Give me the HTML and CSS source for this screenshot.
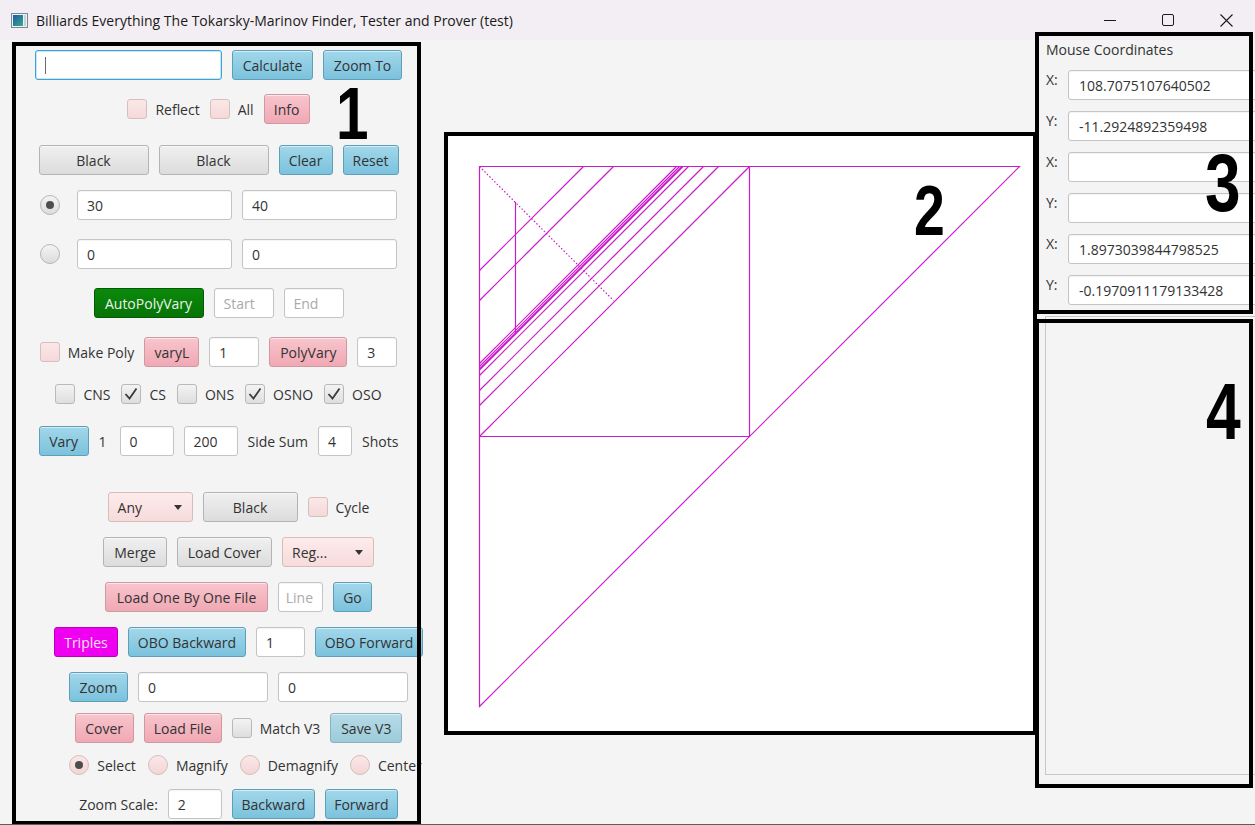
FILE: index.html
```html
<!DOCTYPE html>
<html lang="en">
<head>
<meta charset="utf-8">
<title>Billiards Everything</title>
<link rel="stylesheet" href="styles.css">
</head>
<body>
<div class="window">
  <header class="titlebar">
    <svg class="appicon" width="17" height="15" viewBox="0 0 17 15">
      <defs>
        <linearGradient id="ig" x1="0" y1="0" x2="1" y2="1">
          <stop offset="0" stop-color="#1d5aa6"/>
          <stop offset="1" stop-color="#3aa98a"/>
        </linearGradient>
      </defs>
      <rect x="0.5" y="0.5" width="16" height="14" fill="#eef2f5" stroke="#7b8894"/>
      <rect x="2" y="2" width="10" height="11" fill="url(#ig)"/>
      <rect x="13" y="2" width="2" height="11" fill="#c7d1d8"/>
    </svg>
    <span class="title">Billiards Everything The Tokarsky-Marinov Finder, Tester and Prover (test)</span>
    <div class="winctl">
      <span class="wbtn"><svg width="12" height="12" viewBox="0 0 12 12"><path d="M0 6.5H12" stroke="#1a1a1a" stroke-width="1"/></svg></span>
      <span class="wbtn"><svg width="12" height="12" viewBox="0 0 12 12"><rect x="0.5" y="0.5" width="11" height="11" rx="1.5" fill="none" stroke="#1a1a1a" stroke-width="1"/></svg></span>
      <span class="wbtn"><svg width="13" height="13" viewBox="0 0 13 13"><path d="M0.5 0.5L12.5 12.5M12.5 0.5L0.5 12.5" stroke="#1a1a1a" stroke-width="1.1"/></svg></span>
    </div>
  </header>

  <main class="main">
    <section class="left">
      <div class="group-a">
        <div class="row">
          <div class="field focused w187"><span class="caret"></span></div>
          <button class="btn blue w81">Calculate</button>
          <button class="btn blue w79">Zoom To</button>
        </div>
        <div class="row m14">
          <label class="chk"><span class="cb rose"></span><span>Reflect</span></label>
          <label class="chk"><span class="cb rose"></span><span>All</span></label>
          <button class="btn pink w46">Info</button>
        </div>
        <div class="row m21">
          <button class="btn w110">Black</button>
          <button class="btn w110">Black</button>
          <button class="btn blue w54">Clear</button>
          <button class="btn blue w56">Reset</button>
        </div>
        <div class="row m15">
          <span class="radio on lead"></span>
          <div class="field w155">30</div>
          <div class="field w155">40</div>
        </div>
        <div class="row m19">
          <span class="radio lead"></span>
          <div class="field w155">0</div>
          <div class="field w155">0</div>
        </div>
        <div class="row m19">
          <button class="btn green w110">AutoPolyVary</button>
          <div class="field prompt w60">Start</div>
          <div class="field prompt w60">End</div>
        </div>
        <div class="row m19">
          <label class="chk"><span class="cb rose"></span><span>Make Poly</span></label>
          <button class="btn pink w55">varyL</button>
          <div class="field w50">1</div>
          <button class="btn pink w78">PolyVary</button>
          <div class="field w40">3</div>
        </div>
        <div class="row m12 gap11">
          <label class="chk"><span class="cb"></span><span>CNS</span></label>
          <label class="chk"><span class="cb"><svg width="18" height="18" viewBox="0 0 18 18"><path d="M3.5 9L7.5 13.5L14.5 3.5" fill="none" stroke="#3a3a3a" stroke-width="1.8"/></svg></span><span>CS</span></label>
          <label class="chk"><span class="cb"></span><span>ONS</span></label>
          <label class="chk"><span class="cb"><svg width="18" height="18" viewBox="0 0 18 18"><path d="M3.5 9L7.5 13.5L14.5 3.5" fill="none" stroke="#3a3a3a" stroke-width="1.8"/></svg></span><span>OSNO</span></label>
          <label class="chk"><span class="cb"><svg width="18" height="18" viewBox="0 0 18 18"><path d="M3.5 9L7.5 13.5L14.5 3.5" fill="none" stroke="#3a3a3a" stroke-width="1.8"/></svg></span><span>OSO</span></label>
        </div>
        <div class="row m17">
          <button class="btn blue w50">Vary</button>
          <span class="lbl one">1</span>
          <div class="field w54">0</div>
          <div class="field w54">200</div>
          <span class="lbl">Side Sum</span>
          <div class="field w34">4</div>
          <span class="lbl">Shots</span>
        </div>
      </div>

      <div class="group-b">
        <div class="row m36">
          <div class="combo rose w85"><span>Any</span><span class="arrow"></span></div>
          <button class="btn w95">Black</button>
          <label class="chk"><span class="cb rose"></span><span>Cycle</span></label>
        </div>
        <div class="row m15">
          <button class="btn w64">Merge</button>
          <button class="btn w95">Load Cover</button>
          <div class="combo rose w92"><span>Reg...</span><span class="arrow"></span></div>
        </div>
        <div class="row m15">
          <button class="btn pink w163">Load One By One File</button>
          <div class="field prompt align-end w45">Line</div>
          <button class="btn blue w39">Go</button>
        </div>
        <div class="row m15">
          <button class="btn magenta w64">Triples</button>
          <button class="btn blue w118">OBO Backward</button>
          <div class="field w49">1</div>
          <button class="btn blue w108">OBO Forward</button>
        </div>
        <div class="row m15">
          <button class="btn blue w59">Zoom</button>
          <div class="field w130">0</div>
          <div class="field w130">0</div>
        </div>
        <div class="row m11">
          <button class="btn pink w59">Cover</button>
          <button class="btn pink w78">Load File</button>
          <label class="chk"><span class="cb"></span><span>Match V3</span></label>
          <button class="btn paleblue w72">Save V3</button>
        </div>
        <div class="row m7 gap12 shift">
          <label class="chk"><span class="radio rose on"></span><span>Select</span></label>
          <label class="chk"><span class="radio rose"></span><span>Magnify</span></label>
          <label class="chk"><span class="radio rose"></span><span>Demagnify</span></label>
          <label class="chk"><span class="radio rose"></span><span>Center</span></label>
        </div>
        <div class="row m9">
          <span class="lbl">Zoom Scale:</span>
          <div class="field w54">2</div>
          <button class="btn blue w83">Backward</button>
          <button class="btn blue w73">Forward</button>
        </div>
      </div>
    </section>

    <section class="stage">
      <div class="canvas">
        <svg class="plot" width="585" height="595" viewBox="448 136 585 595">
          <g fill="none" stroke="#c81ec8" stroke-width="1.2">
            <path d="M479.5 166.5H1019.5L479.5 706.5Z"/>
            <path d="M479.5 436.5H749.5V166.5"/>
            <path d="M749.5 166.5L479.5 436.5"/>
            <path d="M583.5 166.5L479.5 270.5"/>
            <path d="M613.5 166.5L479.5 300.5"/>
            <path d="M676.5 166.5L479.5 363.5"/>
            <path d="M679.5 166.5L479.5 366.5"/>
            <path d="M682.5 166.5L479.5 369.5" stroke-width="2"/>
            <path d="M688.5 166.5L479.5 375.5"/>
            <path d="M703.5 166.5L479.5 390.5"/>
            <path d="M718.5 166.5L479.5 405.5"/>
            <path d="M515.5 202V333"/>
            <path d="M479.5 166.5L613.5 300.5" stroke-dasharray="1.5 2"/>
          </g>
        </svg>
      </div>
    </section>

    <aside class="side">
      <div class="mc-title">Mouse Coordinates</div>
      <div class="coord"><span class="axis">X:</span><div class="field wide">108.7075107640502</div></div>
      <div class="coord"><span class="axis">Y:</span><div class="field wide">-11.2924892359498</div></div>
      <div class="coord"><span class="axis">X:</span><div class="field wide"></div></div>
      <div class="coord"><span class="axis">Y:</span><div class="field wide"></div></div>
      <div class="coord"><span class="axis">X:</span><div class="field wide">1.8973039844798525</div></div>
      <div class="coord"><span class="axis">Y:</span><div class="field wide">-0.1970911179133428</div></div>
      <div class="listbox"></div>
    </aside>
  </main>

  <div class="mark mark1"></div>
  <div class="mark mark3"></div>
  <div class="mark mark4"></div>
  <span class="num n1">1</span>
  <span class="num n2">2</span>
  <span class="num n3">3</span>
  <span class="num n4">4</span>
</div>
</body>
</html>
```

FILE: styles.css
```css
* { box-sizing: border-box; }
html, body { margin: 0; padding: 0; }
body {
  width: 1255px;
  height: 825px;
  overflow: hidden;
  background: #f4f4f4;
  font-family: "Open Sans", "Noto Sans", sans-serif;
  font-size: 14px;
  color: #333;
}
.window {
  position: relative;
  width: 1255px;
  height: 825px;
  overflow: hidden;
  border-bottom: 1px solid #5e5e5e;
}

/* title bar */
.titlebar {
  height: 40px;
  display: flex;
  align-items: center;
  background: #f3eef3;
}
.appicon { margin-left: 11px; margin-right: 8px; flex: none; }
.title { flex: 1; font-size: 14px; color: #1a1a1a; white-space: nowrap; }
.winctl { display: flex; align-self: stretch; }
.wbtn { width: 58px; display: flex; align-items: center; justify-content: center; }

/* layout */
.main { display: flex; height: 784px; }
.left {
  width: 437px;
  flex: none;
  padding-top: 10px;
  display: flex;
  flex-direction: column;
}
.group-a, .group-b { display: flex; flex-direction: column; }
.group-b { padding-left: 40px; }
.row {
  display: flex;
  align-items: center;
  justify-content: center;
  gap: 10px;
  height: 30px;
  flex: none;
  white-space: nowrap;
}
.gap11 { gap: 11px; }
.gap12 { gap: 12px; }
.shift { margin-left: 14px; }
.m7 { margin-top: 7px; }
.m9 { margin-top: 9px; }
.m11 { margin-top: 11px; }
.m12 { margin-top: 12px; }
.m14 { margin-top: 14px; }
.m15 { margin-top: 15px; }
.m17 { margin-top: 17px; }
.m19 { margin-top: 19px; }
.m21 { margin-top: 21px; }
.m36 { margin-top: 36px; }

/* widths */
.w34 { width: 34px; } .w39 { width: 39px; } .w40 { width: 40px; }
.w45 { width: 45px; } .w46 { width: 46px; } .w49 { width: 49px; }
.w50 { width: 50px; } .w54 { width: 54px; } .w55 { width: 55px; }
.w56 { width: 56px; } .w59 { width: 59px; } .w60 { width: 60px; }
.w64 { width: 64px; } .w72 { width: 72px; } .w73 { width: 73px; }
.w78 { width: 78px; } .w79 { width: 79px; } .w81 { width: 81px; }
.w83 { width: 83px; } .w85 { width: 85px; } .w92 { width: 92px; }
.w95 { width: 95px; } .w108 { width: 108px; } .w110 { width: 110px; }
.w118 { width: 118px; } .w130 { width: 130px; } .w155 { width: 155px; }
.w163 { width: 163px; } .w187 { width: 187px; }

/* buttons */
.btn {
  height: 30px;
  flex: none;
  padding: 0;
  margin: 0;
  display: flex;
  align-items: center;
  justify-content: center;
  font: inherit;
  color: #333;
  white-space: nowrap;
  border: 1px solid #b4b4b4;
  border-radius: 3px;
  background: linear-gradient(#f0f0f0, #dcdcdc);
  box-shadow: inset 0 1px 0 rgba(255, 255, 255, 0.55);
}
.btn.blue { background: linear-gradient(#a2d7ea, #7bc2dd); border-color: #5e9eb8; }
.btn.paleblue { background: linear-gradient(#b6dce7, #9ccbd9); border-color: #86b2c1; }
.btn.pink { background: linear-gradient(#f8c5cd, #f0a8b4); border-color: #cd99a2; }
.btn.green { background: linear-gradient(#0b8a0b, #067306); border-color: #045a04; color: #e8f3e8; box-shadow: none; }
.btn.magenta { background: #f000f0; border-color: #b800b8; color: #ffe4ff; box-shadow: none; }

/* combo */
.combo {
  height: 30px;
  flex: none;
  display: flex;
  align-items: center;
  justify-content: space-between;
  padding: 0 10px 0 9px;
  border: 1px solid #d8bcbc;
  border-radius: 3px;
  background: linear-gradient(#fdebeb, #f7dbdb);
}
.arrow {
  width: 0;
  height: 0;
  border-left: 4.5px solid transparent;
  border-right: 4.5px solid transparent;
  border-top: 5px solid #333;
}

/* text fields */
.field {
  height: 30px;
  flex: none;
  display: flex;
  align-items: center;
  padding: 0 9px;
  background: #fff;
  border: 1px solid #c4c4c4;
  border-radius: 3px;
  box-shadow: inset 0 1px 1px rgba(0, 0, 0, 0.05);
  white-space: nowrap;
  overflow: hidden;
}
.field.prompt { color: #aaaaaa; }
.field.align-end { justify-content: flex-end; }
.field.focused {
  border-color: #3da1d7;
  box-shadow: inset 0 0 0 1px #c9e8f7;
}
.caret { width: 1px; height: 17px; background: #6a6a6a; }

/* check boxes and radios */
.chk { display: flex; align-items: center; gap: 8px; }
.cb {
  width: 20px;
  height: 20px;
  flex: none;
  display: flex;
  align-items: center;
  justify-content: center;
  border: 1px solid #b9b9b9;
  border-radius: 3px;
  background: linear-gradient(#f3f3f3, #dedede);
}
.cb.rose { background: linear-gradient(#fbe7e7, #f5d9d9); border-color: #d8bebe; }
.radio {
  width: 20px;
  height: 20px;
  flex: none;
  position: relative;
  border-radius: 50%;
  border: 1px solid #b6b6b6;
  background: linear-gradient(#f4f4f4, #dcdcdc);
}
.radio.rose { background: linear-gradient(#fbe7e7, #f3d6d6); border-color: #d6bdbd; }
.radio.on::after {
  content: "";
  position: absolute;
  left: 5px;
  top: 5px;
  width: 8px;
  height: 8px;
  border-radius: 50%;
  background: #4d4d4d;
}
.radio.lead { margin-right: 7px; }
.lbl.one { margin-right: 3px; }

/* canvas */
.stage { margin-left: 7px; margin-top: 92px; flex: none; }
.canvas {
  width: 593px;
  height: 603px;
  border: 4px solid #000;
  background: #fff;
}
.plot { display: block; }

/* right column */
.side { width: 218px; flex: none; padding-left: 9px; }
.mc-title { height: 20px; line-height: 20px; margin-bottom: 10px; white-space: nowrap; }
.coord { display: flex; align-items: flex-start; height: 30px; margin-bottom: 11px; }
.axis { width: 22px; flex: none; line-height: 20px; }
.field.wide { width: 200px; padding-left: 10px; }
.listbox {
  margin-left: -1px;
  margin-top: 5px;
  width: 212px;
  height: 459px;
  border: 1px solid #c8c8c8;
  background: #f4f4f4;
}

/* annotation overlays */
.mark { position: absolute; border: 4px solid #000; pointer-events: none; }
.mark1 { left: 12px; top: 42px; width: 409px; height: 783px; }
.mark3 { left: 1035px; top: 32px; width: 218px; height: 282px; }
.mark4 { left: 1035px; top: 319px; width: 218px; height: 469px; }
.num {
  position: absolute;
  font-family: "Liberation Sans", Arial, sans-serif;
  font-weight: 700;
  line-height: 0.74;
  color: #000;
  transform: scaleX(0.78);
  transform-origin: left top;
}
.n1 { left: 336px; top: 86px; font-size: 75px; }
.n2 { left: 914px; top: 185px; font-size: 71px; }
.n3 { left: 1205px; top: 153px; font-size: 82px; }
.n4 { left: 1206px; top: 382px; font-size: 80px; }
```
